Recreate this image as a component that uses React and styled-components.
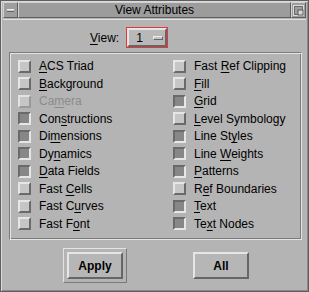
import React from "react";
import styled, { createGlobalStyle } from "styled-components";

const GlobalStyle = createGlobalStyle`
  html, body { margin: 0; padding: 0; background: #b4b4b4; }
  body { font-family: "Liberation Sans", Arial, sans-serif; font-size: 12px; color: #000; }
  * { box-sizing: border-box; }
`;

const Window = styled.div`
  width: 309px;
  height: 292px;
  background: #b4b4b4;
  border: 1px solid #5e5e5e;
  box-shadow: inset 1px 1px 0 #dadada, inset -1px -1px 0 #888;
  padding: 1px 2px 2px 2px;
  display: flex;
  flex-direction: column;
`;

const TitleBar = styled.div`
  display: flex;
  height: 16px;
  flex: none;
`;

const TitleButton = styled.div`
  width: 15px;
  height: 16px;
  background: #9e9e9e;
  border: 1px solid;
  border-color: #d2d2d2 #5e5e5e #5e5e5e #d2d2d2;
  display: flex;
  align-items: center;
  justify-content: center;
`;

const MinusBar = styled.div`
  width: 7px;
  height: 3px;
  background: #c8c8c8;
  border-top: 1px solid #eee;
  border-bottom: 1px solid #666;
`;

const Title = styled.div`
  flex: 1;
  height: 16px;
  background: #9c9c9c;
  border: 1px solid;
  border-color: #d2d2d2 #5e5e5e #5e5e5e #d2d2d2;
  text-align: center;
  font-size: 12px;
  line-height: 14px;
  color: #000;
`;

const Body = styled.div`
  flex: 1;
  display: flex;
  flex-direction: column;
  border-top: 1px solid #e0e0e0;
  margin-top: 1px;
`;

const ViewRow = styled.div`
  display: flex;
  align-items: center;
  height: 21px;
  margin-top: 7px;
  padding-left: 87px;
  gap: 7px;
`;

const U = styled.span`
  text-decoration: underline;
  text-underline-offset: 2px;
`;

const OptionFocus = styled.div`
  width: 42px;
  height: 21px;
  border: 1px solid #e2383c;
`;

const OptionButton = styled.div`
  width: 100%;
  height: 100%;
  border: 2px solid;
  border-color: #e6e6e6 #666 #666 #e6e6e6;
  background: #b8b8b8;
  display: flex;
  align-items: center;
  padding-left: 7px;
  gap: 10px;
  font-size: 12px;
`;

const Indicator = styled.div`
  width: 10px;
  height: 4px;
  background: #c4c4c4;
  border: 1px solid;
  border-color: #eee #666 #666 #eee;
`;

const Group = styled.div`
  margin: 4px 0 0 6px;
  width: 293px;
  height: 188px;
  border: 1px solid;
  border-color: #7a7a7a #e4e4e4 #e4e4e4 #7a7a7a;
  box-shadow: inset 1px 1px 0 #e4e4e4, inset -1px -1px 0 #7a7a7a;
  padding: 4.5px 0 0 8px;
  display: grid;
  grid-template-columns: 155px 1fr;
  grid-auto-flow: column;
  grid-template-rows: repeat(10, 17.5px);
`;

const Toggle = styled.div`
  display: flex;
  align-items: center;
  gap: 8px;
  color: ${(p) => (p.$disabled ? "#8c8c8c" : "#000")};
  white-space: nowrap;
`;

const Box = styled.div`
  width: 13px;
  height: 13px;
  flex: none;
  border: 2px solid;
  border-color: ${(p) =>
    p.$on
      ? "#6a6a6a #e6e6e6 #e6e6e6 #6a6a6a"
      : p.$disabled
      ? "#e2e2e2 #9a9a9a #9a9a9a #e2e2e2"
      : "#e6e6e6 #6a6a6a #6a6a6a #e6e6e6"};
  background: ${(p) => (p.$on ? "#878787" : "#c6c6c6")};
`;

const ButtonRow = styled.div`
  display: flex;
  align-items: flex-start;
  margin-top: 8px;
  padding-left: 60px;
  gap: 62px;
`;

const DefaultRing = styled.div`
  width: 64px;
  height: 35px;
  border: 1px solid;
  border-color: #e4e4e4 #7a7a7a #7a7a7a #e4e4e4;
  padding: 3px;
  display: flex;
  align-items: center;
  justify-content: center;
  border-color: ${(p) => (p.$default ? "#e4e4e4 #7a7a7a #7a7a7a #e4e4e4" : "transparent")};
`;

const PushButton = styled.div`
  width: 56px;
  height: 27px;
  border: 2px solid;
  border-color: #e6e6e6 #666 #666 #e6e6e6;
  background: #b6b6b6;
  font-weight: bold;
  font-size: 12px;
  display: flex;
  align-items: center;
  justify-content: center;
`;

const Mnemonic = ({ text, at }) => {
  if (at < 0) return <>{text}</>;
  return (
    <>
      {text.slice(0, at)}
      <U>{text[at]}</U>
      {text.slice(at + 1)}
    </>
  );
};

const items = [
  ["ACS Triad", 0, false],
  ["Background", 0, false],
  ["Camera", 2, false, true],
  ["Constructions", 3, true],
  ["Dimensions", 2, true],
  ["Dynamics", 2, true],
  ["Data Fields", 0, true],
  ["Fast Cells", 5, false],
  ["Fast Curves", 6, false],
  ["Fast Font", 6, false],
  ["Fast Ref Clipping", 5, false],
  ["Fill", 0, false],
  ["Grid", 0, true],
  ["Level Symbology", 0, false],
  ["Line Styles", 7, true],
  ["Line Weights", 5, true],
  ["Patterns", 0, true],
  ["Ref Boundaries", 1, false],
  ["Text", 0, true],
  ["Text Nodes", 2, true],
];

export default function App() {
  return (
    <>
      <GlobalStyle />
      <Window>
        <TitleBar>
          <TitleButton>
            <MinusBar />
          </TitleButton>
          <Title>View Attributes</Title>
          <TitleButton>
            <svg width="11" height="11" viewBox="0 0 11 11">
              <rect x="0.5" y="0.5" width="10" height="10" fill="none" stroke="#dcdcdc" />
              <rect x="1.5" y="1.5" width="8" height="8" fill="none" stroke="#6a6a6a" />
              <rect x="5" y="5" width="5" height="5" fill="#d8d8d8" stroke="#5a5a5a" strokeWidth="1" />
            </svg>
          </TitleButton>
        </TitleBar>
        <Body>
          <ViewRow>
            <span>
              <Mnemonic text="View:" at={0} />
            </span>
            <OptionFocus>
              <OptionButton>
                <span>1</span>
                <Indicator />
              </OptionButton>
            </OptionFocus>
          </ViewRow>
          <Group>
            {items.map(([t, at, on, dis]) => (
              <Toggle key={t} $disabled={dis}>
                <Box $on={on} $disabled={dis} />
                <span>
                  <Mnemonic text={t} at={at} />
                </span>
              </Toggle>
            ))}
          </Group>
          <ButtonRow>
            <DefaultRing $default>
              <PushButton>Apply</PushButton>
            </DefaultRing>
            <DefaultRing>
              <PushButton>All</PushButton>
            </DefaultRing>
          </ButtonRow>
        </Body>
      </Window>
    </>
  );
}
